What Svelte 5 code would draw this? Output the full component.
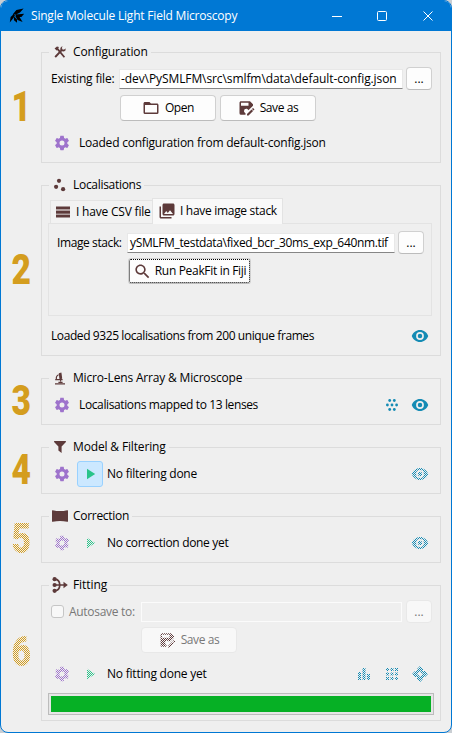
<script>
  const COG = 'M12,15.5A3.5,3.5 0 0,1 8.5,12A3.5,3.5 0 0,1 12,8.5A3.5,3.5 0 0,1 15.5,12A3.5,3.5 0 0,1 12,15.5M19.43,12.97C19.47,12.65 19.5,12.33 19.5,12C19.5,11.67 19.47,11.34 19.43,11L21.54,9.37C21.73,9.22 21.78,8.95 21.66,8.73L19.66,5.27C19.54,5.05 19.27,4.96 19.05,5.05L16.56,6.05C16.04,5.66 15.5,5.32 14.87,5.07L14.5,2.42C14.46,2.18 14.25,2 14,2H10C9.75,2 9.54,2.18 9.5,2.42L9.13,5.07C8.5,5.32 7.96,5.66 7.44,6.05L4.95,5.05C4.73,4.96 4.46,5.05 4.34,5.27L2.34,8.73C2.21,8.95 2.27,9.22 2.46,9.37L4.57,11C4.53,11.34 4.5,11.67 4.5,12C4.5,12.33 4.53,12.65 4.57,12.97L2.46,14.63C2.27,14.78 2.21,15.05 2.34,15.27L4.34,18.73C4.46,18.95 4.73,19.03 4.95,18.95L7.44,17.94C7.96,18.34 8.5,18.68 9.13,18.93L9.5,21.58C9.54,21.82 9.75,22 10,22H14C14.25,22 14.46,21.82 14.5,21.58L14.87,18.93C15.5,18.67 16.04,18.34 16.56,17.94L19.05,18.95C19.27,19.03 19.54,18.95 19.66,18.73L21.66,15.27C21.78,15.05 21.73,14.78 21.54,14.63L19.43,12.97Z';
  const EYE = 'M12 4C7 4 2.73 7.4 1 12c1.73 4.6 6 8 11 8s9.27-3.4 11-8c-1.73-4.6-6-8-11-8zM12 17.2a5.2 5.2 0 1 1 0-10.4 5.2 5.2 0 0 1 0 10.4zm0-8.2a3 3 0 1 0 0 6 3 3 0 0 0 0-6z';
  const SAVE = 'M10,19L10.14,18.86C8.9,18.5 8,17.36 8,16A3,3 0 0,1 11,13C12.36,13 13.5,13.9 13.86,15.14L20,9V7L16,3H4C2.89,3 2,3.9 2,5V19A2,2 0 0,0 4,21H10V19M4,5H14V9H4V5M20.04,12.13C19.9,12.13 19.76,12.19 19.65,12.3L18.65,13.3L20.7,15.35L21.7,14.35C21.92,14.14 21.92,13.79 21.7,13.58L20.42,12.3C20.31,12.19 20.18,12.13 20.04,12.13M18.07,13.88L12,19.94V22H14.06L20.12,15.93L18.07,13.88Z';
  const FOLDER = 'M20,18H4V8H20M20,6H12L10,4H4C2.89,4 2,4.89 2,6V18A2,2 0 0,0 4,20H20A2,2 0 0,0 22,18V8C22,6.89 21.1,6 20,6Z';
  const IMAGES = 'M22 16V4c0-1.1-.9-2-2-2H8c-1.1 0-2 .9-2 2v12c0 1.1.9 2 2 2h12c1.1 0 2-.9 2-2zm-11-4l2.03 2.71L16 11l4 5H8l3-4zM2 6v14c0 1.1.9 2 2 2h14v-2H4V6H2z';
  const SEARCH = 'M15.5 14h-.79l-.28-.27C15.41 12.59 16 11.11 16 9.5 16 5.91 13.09 3 9.5 3S3 5.91 3 9.5 5.91 16 9.5 16c1.61 0 3.09-.59 4.23-1.57l.27.28v.79l5 4.99L20.49 19l-4.99-5zm-6 0C7.01 14 5 11.99 5 9.5S7.01 5 9.5 5 14 7.01 14 9.5 11.99 14 9.5 14z';
</script>

{#snippet icon(d, size, cls)}
  <svg class="icon {cls}" width={size} height={size} viewBox="0 0 24 24"><path fill-rule="evenodd" {d} /></svg>
{/snippet}

{#snippet gear(cls)}
  <svg class="icon purple {cls}" width="16" height="16" viewBox="0.8 0.8 22.4 22.4"><path fill-rule="evenodd" d={COG} /></svg>
{/snippet}

{#snippet play(cls)}
  <svg class="icon green {cls}" width="10" height="12" viewBox="0 0 10 12"><path d="M1 .8L9.2 6L1 11.2Z" /></svg>
{/snippet}

<div class="window">
  <header>
    <svg class="logo" width="16" height="16" viewBox="0 0 16 16">
      <path d="M.8 14.5L1.6 9L4.6 6.2L6 7.6L3.6 11Z M3.6 6.4L7.4 2L14.6 .6L11 4.4L7 6.6Z M6.6 6.4L15.2 5.8L12.4 9L7.4 8.6Z M6 7.4L10.4 8.8L13.6 14L8.6 12Z M4.8 8.2L8 11.4L8 14.8L5 12.2Z" />
    </svg>
    <h1>Single Molecule Light Field Microscopy</h1>
    <svg class="controls" width="104" height="12" viewBox="0 0 104 12">
      <path d="M1 6.5H11M46.5 2.5Q46.5 1.5 47.5 1.5H54.5Q55.5 1.5 55.5 2.5V9.5Q55.5 10.5 54.5 10.5H47.5Q46.5 10.5 46.5 9.5ZM92.5 1.5L101.5 10.5M101.5 1.5L92.5 10.5" />
    </svg>
  </header>

  <main>
    <section class="s1">
      <div class="num"><span>1</span></div>
      <div class="box">
        <div class="legend">
          <span class="lic"><svg class="icon brown" width="12" height="12" viewBox="0 0 13 13"><path d="M.6 2.6L3.2.5L5.4 1.2L4.6 2.4L10.9 10.3L12 11.6L10.6 12.6L3.4 4.2L2.5 4.9L1.8 3.8Z M9.4.4L8.4 2.2L9.6 4L11.6 3.4L12.4 2.4L12.6 4.6L10.8 6L8.6 5.8L2.6 12.2Q1 13 .6 11.2L6.8 4.6Q6.4 1.2 9.4.4Z" /></svg></span>
          <span class="t-conf">Configuration</span>
        </div>
        <div class="row file">
          <span class="label t-exist">Existing file:</span>
          <div class="input"><span class="t-path1">-dev\PySMLFM\src\smlfm\data\default-config.json</span></div>
          <button class="dots">...</button>
        </div>
        <div class="row buttons">
          <button>{@render icon(FOLDER, 18, 'brown')}<span class="t-btn">Open</span></button>
          <button>{@render icon(SAVE, 18, 'brown')}<span class="t-btn">Save as</span></button>
        </div>
        <div class="row status">
          <span class="slot">{@render gear('')}</span>
          <span class="t-loadconf">Loaded configuration from default-config.json</span>
        </div>
      </div>
    </section>

    <section class="s2">
      <div class="num"><span>2</span></div>
      <div class="box">
        <div class="legend">
          <span class="lic"><svg class="icon brown" width="14" height="14" viewBox="0 0 14 14"><circle cx="6" cy="2.8" r="2.1" /><circle cx="3.1" cy="8.8" r="2.1" /><circle cx="10.1" cy="11.2" r="2.1" /></svg></span>
          <span class="t-loc">Localisations</span>
        </div>
        <div class="tabs">
          <div class="tab">
            <svg class="icon brown" width="14" height="12" viewBox="0 0 14 12"><path opacity=".45" d="M0 1H14V11H0Z" /><path d="M0 .4H14V3H0ZM0 4.9H14V7.4H0ZM0 9H14V11.6H0Z" /></svg>
            <span class="t-csv">I have CSV file</span>
          </div>
          <div class="tab active">{@render icon(IMAGES, 18, 'brown')}<span class="t-stack">I have image stack</span></div>
        </div>
        <div class="pane">
          <div class="row file2">
            <span class="label t-is">Image stack:</span>
            <div class="input"><span class="t-path2">ySMLFM_testdata\fixed_bcr_30ms_exp_640nm.tif</span></div>
            <button class="dots">...</button>
          </div>
          <button class="peak">{@render icon(SEARCH, 19, 'brown')}<span class="t-peak">Run PeakFit in Fiji</span></button>
        </div>
        <div class="row status2">
          <span class="t-loaded">Loaded 9325 localisations from 200 unique frames</span>
          <span class="actions"><span class="slot">{@render icon(EYE, 18, 'blue')}</span></span>
        </div>
      </div>
    </section>

    <section class="short">
      <div class="num"><span>3</span></div>
      <div class="box">
        <div class="legend">
          <span class="lic"><svg class="icon brown" width="12" height="13" viewBox="0 0 12 13"><path d="M4.8 1.2L7.4.4L8.2 6.6L6.6 7.4L5.4 6.8Z" /><path class="thin" d="M4.6 2.6Q1.6 4.4 2.4 7.2M1.2 7.6H8.6M6.6 8V9.6M1 11.9H11M4.4 10.4H8.6" /></svg></span>
          <span class="t-mla">Micro-Lens Array &amp; Microscope</span>
        </div>
        <div class="row status">
          <span class="slot">{@render gear('')}</span>
          <span class="t-mapped">Localisations mapped to 13 lenses</span>
          <span class="actions">
            <span class="slot"><svg class="icon blue" width="12" height="12" viewBox="0 0 12 12"><circle cx="3.7" cy="1.5" r="1.4" /><circle cx="8.3" cy="1.5" r="1.4" /><circle cx="1.4" cy="6" r="1.4" /><circle cx="6" cy="6" r="1.4" /><circle cx="10.6" cy="6" r="1.4" /><circle cx="3.7" cy="10.5" r="1.4" /><circle cx="8.3" cy="10.5" r="1.4" /></svg></span>
            <span class="slot">{@render icon(EYE, 18, 'blue')}</span>
          </span>
        </div>
      </div>
    </section>

    <section class="short">
      <div class="num"><span>4</span></div>
      <div class="box">
        <div class="legend">
          <span class="lic"><svg class="icon brown" width="12" height="12" viewBox="0 0 12 12"><path d="M.4 0H11.6Q12.3.6 11.7 1.3L7.6 5.6V12L4.4 9.6V5.6L.3 1.3Q-.3.6.4 0Z" /></svg></span>
          <span class="t-model">Model &amp; Filtering</span>
        </div>
        <div class="row status runnable">
          <span class="slot">{@render gear('')}</span>
          <span class="slot run on">{@render play('')}</span>
          <span class="t-nofilt">No filtering done</span>
          <span class="actions"><span class="slot">{@render icon(EYE, 18, 'blue dither')}</span></span>
        </div>
      </div>
    </section>

    <section class="short">
      <div class="num dither flip"><span>5</span></div>
      <div class="box">
        <div class="legend">
          <span class="lic"><svg class="icon brown" width="16" height="12" viewBox="0 0 16 12"><path d="M0 .8Q0 0 .8.2Q8 2 15.2.2Q16 0 16 .8V11.2Q16 12 15.2 11.8Q8 10 .8 11.8Q0 12 0 11.2Z" /></svg></span>
          <span class="t-corr">Correction</span>
        </div>
        <div class="row status runnable">
          <span class="slot">{@render gear('dither')}</span>
          <span class="slot run">{@render play('dither')}</span>
          <span class="t-nocorr">No correction done yet</span>
          <span class="actions"><span class="slot">{@render icon(EYE, 18, 'blue dither')}</span></span>
        </div>
      </div>
    </section>

    <section class="s6">
      <div class="num dither flip"><span>6</span></div>
      <div class="box">
        <div class="legend">
          <span class="lic"><svg class="icon brown" width="16" height="16" viewBox="0 0 16 16"><circle cx="2.6" cy="2.2" r="2.1" /><circle cx="2.6" cy="8" r="2.1" /><circle cx="2.6" cy="13.8" r="2.1" /><path d="M11.5 4.8L15.8 8L11.5 11.2Z" /><path class="line" d="M3 8H13M3 2.2Q7.6 2.6 7.8 8Q7.6 13.4 3 13.8" /></svg></span>
          <span class="t-fit">Fitting</span>
        </div>
        <div class="row autosave">
          <span class="check"></span>
          <span class="label t-auto">Autosave to:</span>
          <div class="input off"></div>
          <button class="dots off">...</button>
        </div>
        <button class="off save">{@render icon(SAVE, 18, 'brown dither')}<span class="t-btn">Save as</span></button>
        <div class="row status runnable">
          <span class="slot">{@render gear('dither')}</span>
          <span class="slot run">{@render play('dither')}</span>
          <span class="t-nofit">No fitting done yet</span>
          <span class="actions">
            <span class="slot"><svg class="icon blue dither" width="12" height="12" viewBox="0 0 12 12"><path d="M0 4H3V12H0ZM4.5 0H7.5V12H4.5ZM9 6H12V12H9Z" /></svg></span>
            <span class="slot"><svg class="icon blue dither" width="12" height="12" viewBox="0 0 12 12"><path d="M0 0H3V3H0ZM4.5 0H7.5V3H4.5ZM9 0H12V3H9ZM0 4.5H3V7.5H0ZM4.5 4.5H7.5V7.5H4.5ZM9 4.5H12V7.5H9ZM0 9H3V12H0ZM4.5 9H7.5V12H4.5ZM9 9H12V12H9Z" /></svg></span>
            <span class="slot"><svg class="icon blue dither" width="16" height="16" viewBox="0 0 16 16"><path fill-rule="evenodd" d="M8 0L11 3V5H13L16 8L13 11H11V13L8 16L5 13V11H3L0 8L3 5H5V3ZM8 5L6.8 6.8L5 8L6.8 9.2L8 11L9.2 9.2L11 8L9.2 6.8Z" /></svg></span>
          </span>
        </div>
        <div class="progress"><div class="bar"></div></div>
      </div>
    </section>
  </main>
</div>

<style>
  :global(body) { background: #c9ced3; }
  .window {
    box-sizing: border-box; width: 452px; height: 733px;
    border: 1px solid #0078d4; border-radius: 8px; overflow: hidden;
    background: #efefef; color: #000;
    font: 12px/16px "Open Sans", "Noto Sans", sans-serif;
  }
  header { height: 30px; background: #0078d4; display: flex; align-items: center; padding-left: 8px; }
  .logo { fill: #000; flex: none; }
  h1 { margin: 0 0 0 6px; flex: 1; font-size: 12px; font-weight: 400; color: #fff; white-space: nowrap; letter-spacing: -.2px; }
  .controls { margin-right: 16px; fill: none; stroke: #fff; stroke-width: 1; }
  main { padding-top: 21px; display: flex; flex-direction: column; gap: 22px; }
  section { display: flex; align-items: stretch; }
  .num { width: 40px; flex: none; display: flex; align-items: center; justify-content: center; }
  .num span { color: #d49d1e; font: 900 42px/42px Roboto, "DejaVu Sans", sans-serif; transform: translateY(-1px) scaleX(.8); }
  .box {
    box-sizing: border-box; width: 400px; border: 1px solid #dcdcdc;
    display: flex; flex-direction: column; white-space: nowrap;
  }
  .s1 .box { height: 111px; }
  .s2 .box { height: 171px; }
  .short .box { height: 47px; }
  .s6 .box { height: 136px; }
  .legend {
    align-self: flex-start; height: 16px; margin: -9px 0 0 7px; padding-right: 3px;
    background: #efefef; display: flex; align-items: center;
  }
  .lic { box-sizing: border-box; width: 24px; height: 16px; display: flex; align-items: center; padding-right: 2px; justify-content: center; }
  .icon { display: block; flex: none; }
  .brown { fill: #5d3a3a; }
  .purple { fill: #9e73cc; }
  .blue { fill: #148bb4; }
  .green { fill: #29c48a; }
  .line { fill: none; stroke: #5d3a3a; stroke-width: 1.7; }
  .thin { fill: none; stroke: #5d3a3a; stroke-width: 1.1; }
  .dither {
    -webkit-mask: repeating-conic-gradient(#000 0 25%, transparent 0 50%) 0 0 / 2px 2px;
    mask: repeating-conic-gradient(#000 0 25%, transparent 0 50%) 0 0 / 2px 2px;
  }
  .dither.flip { -webkit-mask-position: 1px 0; mask-position: 1px 0; }
  .row { display: flex; align-items: center; }
  .slot { width: 26px; height: 26px; flex: none; display: flex; align-items: center; justify-content: center; }
  .input {
    box-sizing: border-box; height: 20px; background: #fff; border: 1px solid #e8e8e8;
    border-bottom-color: #868686; display: flex; align-items: center; padding-left: 1px; overflow: hidden;
  }
  .input.off { background: #efefef; border-color: #fbfbfb; }
  button {
    box-sizing: border-box; padding: 0; font: inherit; color: #000; background: #fdfdfd;
    border: 1px solid #d0d0d0; border-bottom-color: #bcbcbc; border-radius: 4px;
    display: flex; align-items: center; justify-content: center; gap: 4px;
  }
  .buttons button:first-child { gap: 5px; }
  .dots { width: 26px; height: 23px; }
  button.off { background: #f8f8f8; border-color: #e8e8e8; color: #787878; }

  .t-conf { letter-spacing: -.15px; }
  .t-exist { letter-spacing: -.18px; }
  .t-path1 { letter-spacing: -.09px; }
  .t-btn { letter-spacing: -.4px; }
  .t-loadconf { letter-spacing: -.22px; }
  .t-loc { letter-spacing: -.3px; }
  .t-csv { letter-spacing: -.2px; }
  .t-stack { letter-spacing: -.3px; }
  .t-is { letter-spacing: -.4px; }
  .t-path2 { letter-spacing: -.35px; }
  .t-peak { letter-spacing: -.32px; }
  .t-loaded { letter-spacing: -.41px; }
  .t-mla { letter-spacing: -.17px; }
  .t-mapped { letter-spacing: -.38px; }
  .t-model { letter-spacing: -.15px; }
  .t-nofilt { letter-spacing: -.24px; }
  .t-corr { letter-spacing: -.3px; }
  .t-nocorr { letter-spacing: -.32px; }
  .t-fit { letter-spacing: -.07px; }
  .t-auto { letter-spacing: -.3px; }
  .t-nofit { letter-spacing: -.22px; }

  .file { height: 23px; margin: 7px 0 0 9px; }
  .file .label { width: 68px; }
  .file .input { width: 284px; margin-right: 3px; }
  .buttons { margin: 5px 0 0 78px; gap: 4px; }
  .buttons button { width: 96px; height: 26px; }
  .status { height: 26px; margin: 0 7px 0 7px; }
  .s1 .status { margin-top: 9px; }
  .s1 .status > .slot, .short .status > .slot { margin-right: 4px; }
  .actions { margin-left: auto; display: flex; gap: 2px; }

  .tabs { display: flex; align-items: flex-end; margin: 5px 0 0 8px; height: 25px; }
  .tab {
    box-sizing: border-box; width: 103px; height: 23px; border: 1px solid #e3e3e3; border-bottom: 0;
    background: #f2f2f2; display: flex; align-items: center; gap: 6px; padding-left: 5px;
  }
  .tab.active { position: relative; width: 131px; height: 26px; margin: 0 0 -1px -1px; background: #f9f9f9; gap: 4px; padding: 0 0 1px 5px; }
  .pane { box-sizing: border-box; width: 384px; height: 93px; margin-left: 6px; border: 1px solid #e3e3e3; padding-top: 7px; }
  .file2 { height: 23px; margin-left: 8px; }
  .file2 .label { width: 70px; }
  .file2 .input { width: 268px; margin-right: 3px; padding-left: 2px; }
  .peak { width: 123px; height: 26px; margin: 4px 0 0 79px; gap: 3px; outline: 1px dotted #000; outline-offset: -2px; border-radius: 3px; }
  .status2 { height: 26px; margin: 7px 7px 0 9px; }

  .short .status { margin-top: 6px; }
  .short .status.runnable > .slot, .s6 .status > .slot { margin-right: 2px; }
  .short .status.runnable > .run, .s6 .status > .run { margin-right: 4px; }
  .slot.run { box-sizing: border-box; border: 1px solid transparent; border-radius: 3px; padding-left: 2px; }
  .slot.run.on { background: #cce8ff; border-color: #99d1ff; }

  .autosave { height: 23px; margin: 7px 0 0 9px; color: #787878; }
  .check { box-sizing: border-box; width: 13px; height: 13px; border: 1px solid #c6c6c6; border-radius: 3px; background: #f8f8f8; }
  .autosave .label { width: 72px; margin-left: 5px; }
  .autosave .input { width: 261px; margin-right: 4px; }
  .save { width: 96px; height: 26px; margin: 4px 0 0 99px; }
  .s6 .status { margin-top: 8px; }
  .progress {
    box-sizing: border-box; width: 386px; height: 22px; margin: 6px 0 0 6px;
    border: 1px solid #bcbcbc; background: #e6e6e6; padding: 2px;
  }
  .bar { height: 16px; background: #06b025; }
</style>
